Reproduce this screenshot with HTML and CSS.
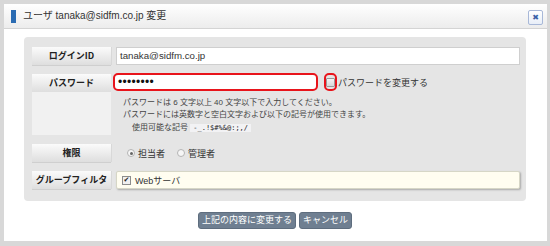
FILE: index.html
```html
<!DOCTYPE html>
<html lang="ja">
<head>
<meta charset="utf-8">
<link rel="stylesheet" href="styles.css">
</head>
<body>
<div class="dialog">
  <div class="header">
    <span class="bar"></span>
    <span class="title">ユーザ tanaka@sidfm.co.jp 変更</span>
    <span class="close">&#x2716;</span>
  </div>
  <div class="content">
    <div class="panel">
      <div class="label">ログインID</div>
      <div class="value"><div class="textbox">tanaka@sidfm.co.jp</div></div>

      <div class="label tall">パスワード</div>
      <div class="value">
        <div class="pwline">
          <div class="pwbox">••••••••</div>
          <span class="cbring"><span class="cb"></span></span>
          <span class="pwchange">パスワードを変更する</span>
        </div>
        <div class="help">
          <div>パスワードは 6 文字以上 40 文字以下で入力してください。</div>
          <div>パスワードには英数字と空白文字および以下の記号が使用できます。</div>
          <div class="indent">使用可能な記号 <code class="sym">-_.!$#%&amp;@:;,/</code></div>
        </div>
      </div>

      <div class="label">権限</div>
      <div class="value radios">
        <span class="radio on"></span><span class="rtext">担当者</span>
        <span class="radio"></span><span class="rtext">管理者</span>
      </div>

      <div class="label">グループフィルタ</div>
      <div class="value"><div class="filterbox"><span class="checked">&#x2714;</span><span>Webサーバ</span></div></div>
    </div>
    <div class="buttons">
      <span class="btn">上記の内容に変更する</span>
      <span class="btn">キャンセル</span>
    </div>
  </div>
</div>
</body>
</html>
```
FILE: styles.css
```css
* { box-sizing: border-box; }
html, body { margin: 0; padding: 0; }
body {
  width: 550px;
  height: 246px;
  background: #d8d8d8;
  padding: 4px 3px 5px 4px;
  font-family: "Liberation Sans", "Noto Sans CJK JP", sans-serif;
  color: #333;
  overflow: hidden;
}
.dialog {
  background: #fff;
  height: 237px;
  display: flex;
  flex-direction: column;
}
.header {
  height: 25px;
  display: flex;
  align-items: center;
  padding-left: 7px;
  padding-right: 4px;
  background: linear-gradient(#ffffff, #ececec);
  border-bottom: 1px solid #d4d4d4;
}
.bar {
  width: 5px;
  height: 13px;
  background: #2b6cb3;
  margin-right: 7px;
  margin-top: 1px;
}
.title {
  font-size: 10px;
  color: #333;
  flex: 1;
  line-height: 14px;
}
.close {
  width: 15px;
  height: 15px;
  border: 1px solid #a8b8d8;
  border-radius: 2px;
  background: linear-gradient(#ffffff, #e8eef8);
  color: #3a62a8;
  font-size: 8px;
  line-height: 13px;
  text-align: center;
  font-family: "DejaVu Sans", sans-serif;
  margin-top: 2px;
}
.content {
  padding: 8px 21px 0 20px;
  flex: 1;
}
.panel {
  background: #e5e5e5;
  border-radius: 4px;
  padding: 10px 6px 12px 8px;
  display: grid;
  grid-template-columns: 79px 1fr;
  grid-template-rows: 18px 61px 18px 18px;
  column-gap: 5px;
  row-gap: 9px;
}
.label {
  background: linear-gradient(#fbfbfb, #dedede);
  box-shadow: 0 1px 0 #cfcfcf, 1px 0 0 #d8d8d8;
  font-family: "Noto Sans CJK JP", sans-serif;
  font-size: 9px;
  font-weight: bold;
  text-align: center;
  line-height: 18px;
  color: #222;
  white-space: nowrap;
}
.label.tall {
  background: linear-gradient(#fbfbfb, #dedede) no-repeat top / 100% 18px, #f1f1f1;
  box-shadow: none;
}
.value { min-width: 0; }
.textbox {
  height: 18px;
  background: #fff;
  border: 1px solid #cfcfcf;
  font-size: 9.7px;
  line-height: 16px;
  padding-left: 3px;
  color: #333;
}
.pwline {
  display: flex;
  align-items: center;
  height: 18px;
  margin-top: -1px;
}
.pwbox {
  width: 205px;
  height: 18px;
  margin-left: -3px;
  border: 2px solid #e8141b;
  border-radius: 5px;
  background: #fff;
  font-family: "Liberation Sans", sans-serif;
  font-size: 12px;
  line-height: 14px;
  padding-left: 3px;
  letter-spacing: 0.3px;
  color: #111;
}
.cbring {
  width: 13px;
  height: 18px;
  border: 2px solid #e8141b;
  border-radius: 5px;
  margin-left: 6px;
  display: flex;
  align-items: center;
  justify-content: center;
}
.cb {
  width: 9px;
  height: 9px;
  border: 1px solid #9a9a9a;
  background: linear-gradient(#f4f4f4, #d8d8d8);
  border-radius: 1px;
}
.pwchange {
  font-size: 9px;
  color: #333;
  margin-left: 1px;
}
.help {
  margin-top: 6px;
  padding-left: 7px;
  font-size: 8px;
  line-height: 12px;
  color: #444;
}
.help .indent { padding-left: 9px; margin-top: 1px; }
.sym {
  font-family: "DejaVu Sans Mono", monospace;
  font-size: 7px;
  background: #f2f2f4;
  padding: 0 3px;
  color: #222;
}
.radios {
  display: flex;
  align-items: center;
  padding-left: 11px;
  font-size: 9px;
}
.radio {
  width: 8px;
  height: 8px;
  border: 1px solid #b4b4b4;
  border-radius: 50%;
  background: #f6f6f6;
  display: flex;
  align-items: center;
  justify-content: center;
}
.radio.on::after {
  content: "";
  width: 3px;
  height: 3px;
  border-radius: 50%;
  background: #666;
}
.rtext { margin-left: 3px; margin-right: 12px; color: #333; }
.filterbox {
  height: 18px;
  background: #fffdf0;
  border: 1px solid #d6d6c6;
  border-radius: 2px;
  box-shadow: 1px 1px 2px #a8a8a8;
  display: flex;
  align-items: center;
  padding-left: 5px;
  font-size: 9px;
  color: #333;
}
.checked {
  width: 9px;
  height: 9px;
  border: 1px solid #8c8c8c;
  background: #f0f0f0;
  font-size: 7px;
  line-height: 7px;
  text-align: center;
  color: #222;
  margin-right: 4px;
  font-family: "DejaVu Sans", sans-serif;
}
.buttons {
  display: flex;
  justify-content: center;
  gap: 3px;
  margin-top: 11px;
}
.btn {
  height: 17px;
  padding: 0 3px;
  background: #6f7f91;
  border: 1px solid #5e6d7e;
  border-radius: 3px;
  color: #fff;
  font-size: 9px;
  line-height: 15px;
}
```
